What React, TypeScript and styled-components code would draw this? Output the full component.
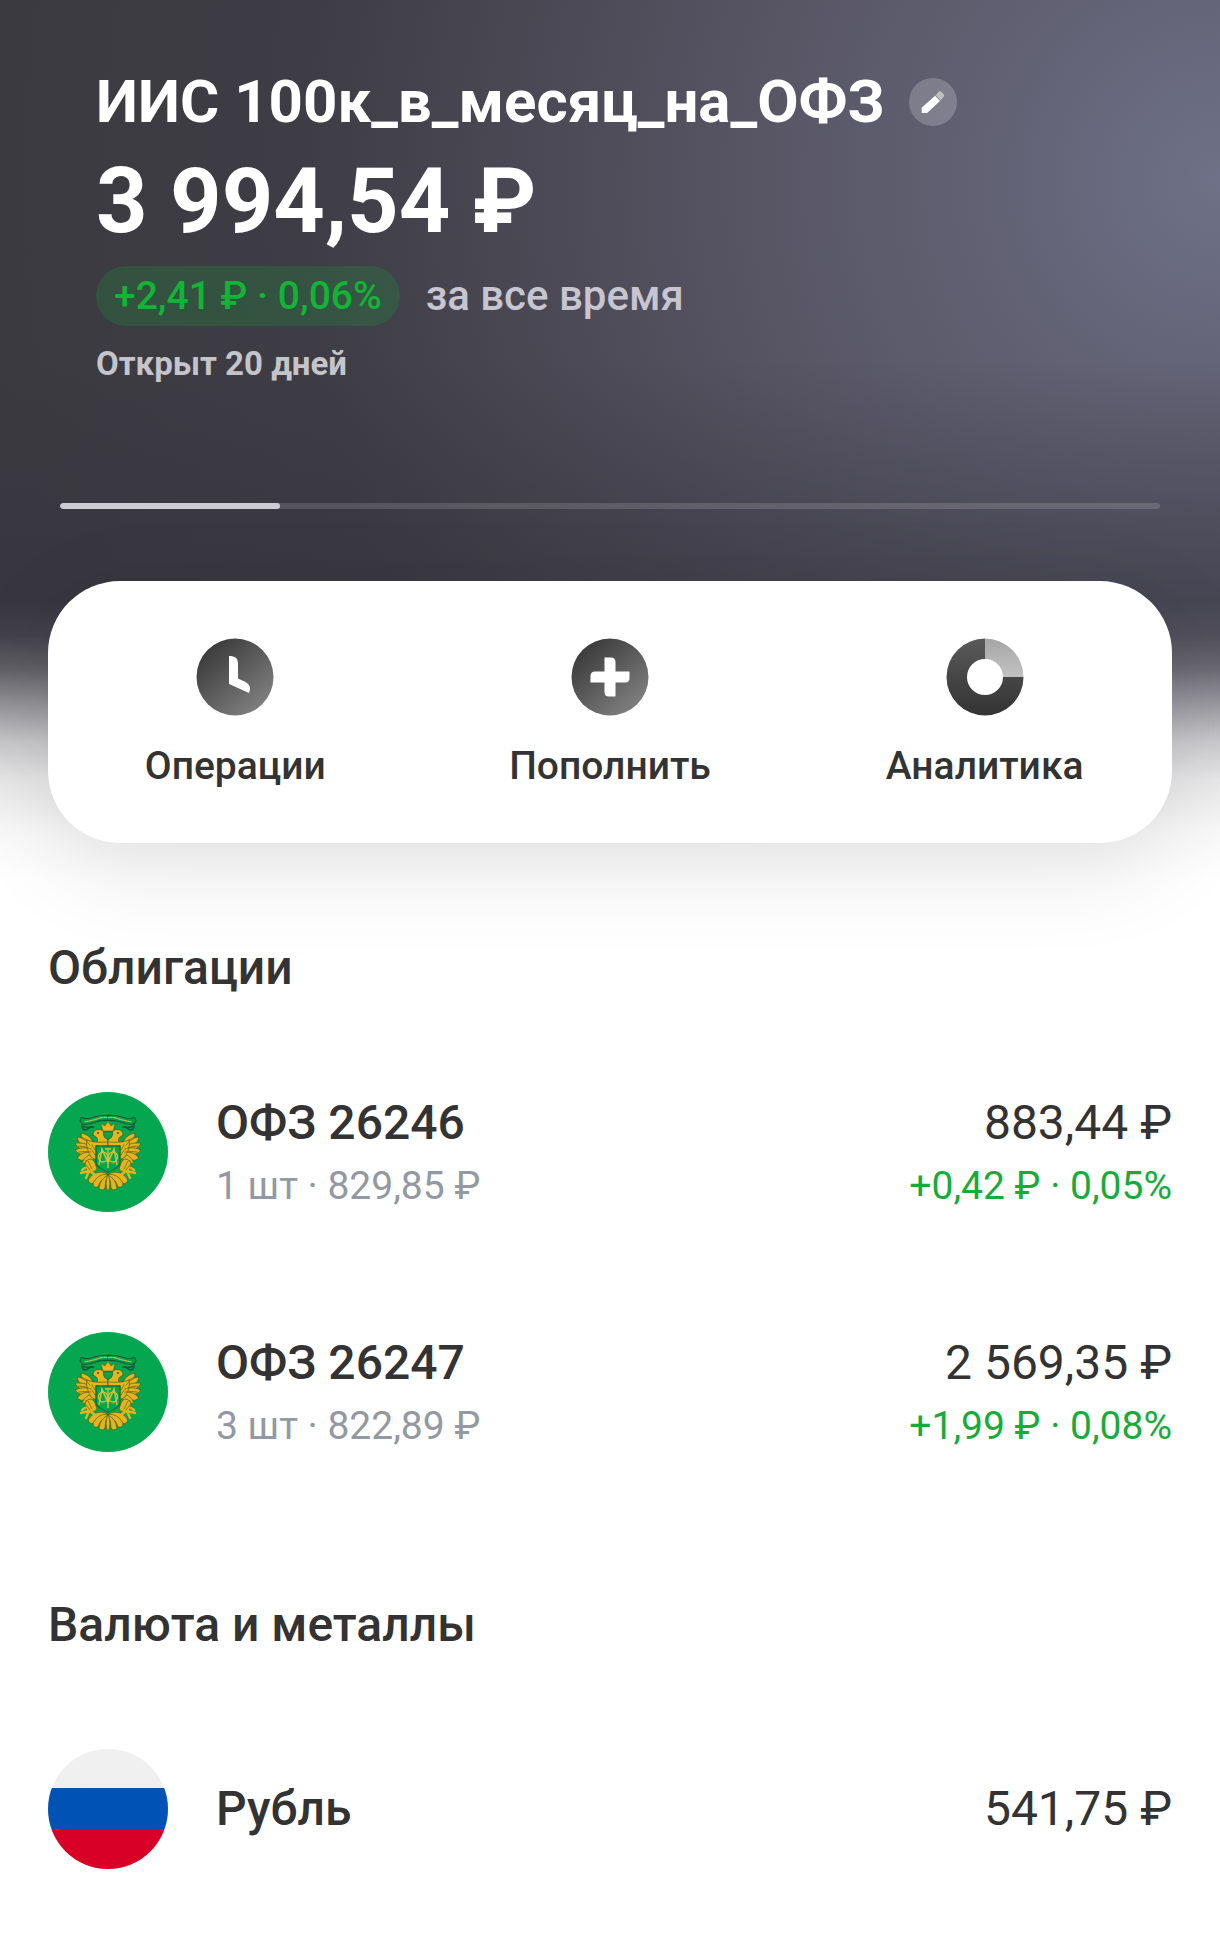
import React, { useId } from 'react';
import styled, { createGlobalStyle } from 'styled-components';

const GlobalStyle = createGlobalStyle`
    *, *::before, *::after {
        box-sizing: border-box;
    }

    body {
        margin: 0;
        background: #ffffff;
        color: #333333;
        font-family: Roboto, "Liberation Sans", sans-serif;
    }
`;

const Hero = styled.header`
    padding: 66px 48px 95px;
    background:
        linear-gradient(
            to bottom,
            rgba(255, 255, 255, 0) 600px,
            rgba(255, 255, 255, 0.06) 635px,
            rgba(255, 255, 255, 0.2) 668px,
            rgba(255, 255, 255, 0.45) 703px,
            rgba(255, 255, 255, 0.72) 742px,
            rgba(255, 255, 255, 0.88) 780px,
            rgba(255, 255, 255, 0.97) 830px,
            #ffffff 880px
        ),
        linear-gradient(to bottom, rgba(52, 51, 62, 0) 360px, rgba(52, 51, 62, 0.5) 600px),
        radial-gradient(
            circle at 100% 180px,
            #6e7187 0,
            #626275 220px,
            #595766 440px,
            #4b4955 680px,
            #3e3d45 920px,
            #3b3a40 1240px
        );
`;

const Summary = styled.div`
    display: flex;
    flex-direction: column;
    gap: 10px;
    padding: 0 48px;
    color: #ffffff;
`;

const TitleRow = styled.div`
    display: flex;
    align-items: center;
    gap: 24px;
`;

const Title = styled.h1`
    margin: 0;
    font-size: 60px;
    font-weight: 700;
    line-height: 72px;
`;

const EditButton = styled.button`
    display: flex;
    width: 48px;
    height: 48px;
    padding: 0;
    border: 0;
    border-radius: 50%;
    background: rgba(255, 255, 255, 0.2);
    cursor: pointer;
`;

const Balance = styled.div`
    font-size: 90px;
    font-weight: 700;
    line-height: 108px;
`;

const YieldRow = styled.div`
    display: flex;
    align-items: center;
    gap: 26px;
`;

const YieldPill = styled.span`
    padding: 0 18px;
    border-radius: 30px;
    background: rgba(15, 174, 57, 0.2);
    color: #12b436;
    font-size: 39px;
    font-weight: 500;
    line-height: 60px;
`;

const Period = styled.span`
    color: #c6c5d0;
    font-size: 42px;
    font-weight: 500;
    line-height: 60px;
`;

const OpenedFor = styled.div`
    color: #c4c4ca;
    font-size: 33px;
    font-weight: 700;
    line-height: 56px;
`;

const Track = styled.div`
    height: 6px;
    margin: 111px 12px 72px;
    border-radius: 3px;
    background: rgba(255, 255, 255, 0.14);
    overflow: hidden;
`;

const TrackFill = styled.div`
    height: 100%;
    border-radius: 3px;
    background: #cdccd2;
`;

const ActionCard = styled.nav`
    display: grid;
    grid-template-columns: repeat(3, 1fr);
    border-radius: 72px;
    background: #ffffff;
    box-shadow: 0 24px 96px rgba(0, 0, 0, 0.11);
`;

const Action = styled.button`
    display: flex;
    flex-direction: column;
    align-items: center;
    gap: 26px;
    padding: 57px 0 53px;
    border: 0;
    background: none;
    color: #333333;
    font-family: inherit;
    font-size: 39px;
    font-weight: 500;
    line-height: 48px;
    cursor: pointer;
`;

const Section = styled.section`
    padding: 0 48px 83px;
`;

const SectionTitle = styled.h2`
    margin: 0 0 34px;
    font-size: 48px;
    font-weight: 500;
    line-height: 60px;
`;

const Positions = styled.ul`
    margin: 0;
    padding: 0;
    list-style: none;
`;

const Position = styled.li`
    display: flex;
    align-items: center;
    gap: 48px;
    padding: 60px 0;
`;

const Avatar = styled.svg`
    flex: none;
    width: 120px;
    height: 120px;
    border-radius: 50%;
`;

const Info = styled.div<{ $end?: boolean }>`
    display: flex;
    flex-direction: column;
    gap: 6px;
    ${(p) => p.$end && 'margin-left: auto; text-align: right;'}
`;

const Primary = styled.span<{ $strong?: boolean }>`
    font-size: 48px;
    font-weight: ${(p) => p.$strong ? 500 : 400};
    line-height: 62px;
`;

const Secondary = styled.span<{ $gain?: boolean }>`
    color: ${(p) => p.$gain ? '#17ab3a' : '#9299a2'};
    font-size: 39px;
    line-height: 52px;
`;

function PencilIcon() {
    return (
        <svg width="48" height="48" viewBox="0 0 48 48" aria-hidden="true">
            <path d="M12.7 29.7 L26 17.7 L31 23 L18 35 H12.7 Z" fill="#ffffff" />
            <path d="M26.6 17.2 L29.6 13.8 Q30.8 12.4 32.2 13.8 L34.6 16 Q35.8 17.4 34.8 18.8 L31.5 22.6 Z" fill="#ffffff" opacity="0.5" />
        </svg>
    );
}

function DiscGradient({ id }: { id: string }) {
    return (
        <linearGradient id={id} x1="0.15" y1="0.1" x2="0.85" y2="0.9">
            <stop offset="0" stopColor="#3a3a3a" />
            <stop offset="1" stopColor="#808080" />
        </linearGradient>
    );
}

function ClockIcon() {
    const id = useId();
    return (
        <svg width="78" height="78" viewBox="0 0 78 78" aria-hidden="true">
            <defs><DiscGradient id={id} /></defs>
            <circle cx="39" cy="39" r="38.5" fill={`url(#${id})`} />
            <path d="M33 18 H35 Q42 18.5 42 25 V40.5 L49.5 44 Q56 47.5 53 55 L33 46 Z" fill="#ffffff" />
        </svg>
    );
}

function PlusIcon() {
    const id = useId();
    return (
        <svg width="78" height="78" viewBox="0 0 78 78" aria-hidden="true">
            <defs><DiscGradient id={id} /></defs>
            <circle cx="39" cy="39" r="38.5" fill={`url(#${id})`} />
            <path
                d="M33.5 19.5 H40 Q44.5 19.5 44.5 24 V33.5 H58.5 V40 Q58.5 44.5 54 44.5 H44.5 V58.5 H38 Q33.5 58.5 33.5 54 V44.5 H19.5 V38 Q19.5 33.5 24 33.5 H33.5 Z"
                fill="#ffffff"
            />
        </svg>
    );
}

function DonutIcon() {
    const id = useId();
    return (
        <svg width="78" height="78" viewBox="0 0 78 78" aria-hidden="true">
            <defs>
                <linearGradient id={`${id}-dark`} x1="0" y1="0" x2="0" y2="1">
                    <stop offset="0" stopColor="#5a5a5a" />
                    <stop offset="1" stopColor="#333333" />
                </linearGradient>
                <linearGradient id={`${id}-light`} x1="0" y1="0" x2="0" y2="1">
                    <stop offset="0" stopColor="#a6a6a6" />
                    <stop offset="1" stopColor="#c2c2c2" />
                </linearGradient>
            </defs>
            <path d="M39 0.5 A38.5 38.5 0 1 0 77.5 39 H57 A18 18 0 1 1 39 21 Z" fill={`url(#${id}-dark)`} />
            <path d="M39 0.5 A38.5 38.5 0 0 1 77.5 39 H57 A18 18 0 0 0 39 21 Z" fill={`url(#${id}-light)`} />
        </svg>
    );
}

// One side of the eagle; the emblem is symmetric around x = 60.
function EagleHalf() {
    return (
        <g strokeLinejoin="round" strokeLinecap="round">
            {/* ribbon */}
            <path d="M60 23 Q51 23 44 25.5 Q38 27.5 33 25.5 L32 29 L34 32 Q40 33 46 30.5 Q53 28 60 28.5 Z" fill="#089a4c" stroke="#0b5c36" strokeWidth="1.1" />
            <path d="M37 29.8 Q44 28.6 50 26.6 T60 25.8" fill="none" stroke="#a9c444" strokeWidth="1.3" strokeDasharray="1 1.2" />
            <path d="M34 33 Q34 39 39 37.5 Q42 34 45 35 M36 34.5 L41 36" fill="none" stroke="#0b5c36" strokeWidth="1.8" />
            <g fill="#e6b41c" stroke="#4f5d1c" strokeWidth="0.7">
                {/* head and neck */}
                <path d="M45 43 Q45 38 50 37.5 Q56 37 58 44 L60 49 V52 H46 Q51 50 49 46 Q47 44 45 43 Z" />
                {/* wing feathers */}
                <path d="M42 54 Q33 49 33 41 Q41 42 45 50 Z" />
                <path d="M42 56 Q30 53 29 45 Q37 45 44 52 Z" />
                <path d="M43 59 Q30 59 27 51 Q35 50 44 54 Z" />
                <path d="M44 62 Q33 66 27 58 Q35 54 44 57 Z" />
                <path d="M45 64 Q36 72 29 66 Q34 59 45 60 Z" />
                <path d="M47 65 Q42 73 34 71 Q37 63 45 62 Z" />
                <path d="M39 48 Q44 51 60 50 V53.5 Q52 54.5 48 53.5 V68 L43 65 Q37 55 39 48 Z" />
                {/* leg */}
                <path d="M38 69 Q44 64 47 71 L49 77 Q46 81 41 80 Q35 76 38 69 Z" />
                {/* tail */}
                <path d="M58 81 Q49 78 42 85 Q38 90 44 92 Q50 84 58 84 Z" />
                <path d="M59 82 Q50 82 45 91 Q45 96 50 95 Q52 88 59 84 Z" />
                <path d="M60 83 Q52 87 51 96 Q54 100 57 96 Q57 88 60 84 Z" />
            </g>
            {/* claw */}
            <path d="M42 79 L47 83 M41 79 L38 86 M41 79 L33 81 M37 76 L34 78" fill="none" stroke="#e6b41c" strokeWidth="2.4" />
            <path d="M32 45 Q38 48 42 53 M30 54 Q37 54 43 57 M31 60 Q38 59 43 60 M44 53 L47 58 M44 58 L47 63 M40 69 L44 77 M38 73 L42 78" fill="none" stroke="#55641c" strokeWidth="0.7" />
            <circle cx="50" cy="41" r="0.9" fill="#24431d" />
        </g>
    );
}

function EmblemAvatar() {
    return (
        <Avatar viewBox="0 0 120 120" aria-hidden="true">
            <rect width="120" height="120" fill="#04a650" />
            <EagleHalf />
            <g transform="matrix(-1 0 0 1 120 0)"><EagleHalf /></g>
            <path d="M60 82 Q56 92 60 100 Q64 92 60 82 Z" fill="#e6b41c" stroke="#4f5d1c" strokeWidth="0.7" />
            {/* crown */}
            <path d="M55 39 L53 31.5 L57 34 L60 29.5 L63 34 L67 31.5 L65 39 Z" fill="#f5b417" stroke="#5d6a1c" strokeWidth="0.6" />
            <path d="M55.5 40 H64.5 V43 Q64 46 60 47.5 Q56 46 55.5 43 Z" fill="#04a650" stroke="#0a6a35" strokeWidth="0.7" />
            {/* shield with the interlaced sign */}
            <path d="M48 54 H72 V71 Q71 76 60 80 Q49 76 48 71 Z" fill="#04a650" stroke="#0a6a35" strokeWidth="1.2" />
            <g fill="none" stroke="#d3c433" strokeWidth="1.4">
                <path d="M60 57 V76 M57 57 H63 M51 73 L54 57 L60 71 L66 57 L69 73" />
                <ellipse cx="55" cy="65" rx="4.5" ry="5" />
                <ellipse cx="65" cy="65" rx="4.5" ry="5" />
            </g>
        </Avatar>
    );
}

function FlagAvatar() {
    return (
        <Avatar viewBox="0 0 120 120" aria-hidden="true">
            <rect width="120" height="120" fill="#f0f0f0" />
            <rect y="39" width="120" height="42" fill="#0052b4" />
            <rect y="81" width="120" height="39" fill="#d80027" />
        </Avatar>
    );
}

const bonds = [
    { name: 'ОФЗ 26246', details: '1 шт · 829,85 ₽', total: '883,44 ₽', gain: '+0,42 ₽ · 0,05%' },
    { name: 'ОФЗ 26247', details: '3 шт · 822,89 ₽', total: '2 569,35 ₽', gain: '+1,99 ₽ · 0,08%' },
];

const scrolled = 20;

export default function App() {
    return (
        <>
            <GlobalStyle />
            <Hero>
                <Summary>
                    <TitleRow>
                        <Title>ИИС 100к_в_месяц_на_ОФЗ</Title>
                        <EditButton type="button" aria-label="Изменить название">
                            <PencilIcon />
                        </EditButton>
                    </TitleRow>
                    <Balance>3 994,54 ₽</Balance>
                    <YieldRow>
                        <YieldPill>+2,41 ₽ · 0,06%</YieldPill>
                        <Period>за все время</Period>
                    </YieldRow>
                    <OpenedFor>Открыт 20 дней</OpenedFor>
                </Summary>
                <Track role="progressbar" aria-valuenow={scrolled} aria-valuemin={0} aria-valuemax={100}>
                    <TrackFill style={{ width: `${scrolled}%` }} />
                </Track>
                <ActionCard>
                    <Action type="button"><ClockIcon />Операции</Action>
                    <Action type="button"><PlusIcon />Пополнить</Action>
                    <Action type="button"><DonutIcon />Аналитика</Action>
                </ActionCard>
            </Hero>
            <main>
                <Section>
                    <SectionTitle>Облигации</SectionTitle>
                    <Positions>
                        {bonds.map((bond) => (
                            <Position key={bond.name}>
                                <EmblemAvatar />
                                <Info>
                                    <Primary $strong>{bond.name}</Primary>
                                    <Secondary>{bond.details}</Secondary>
                                </Info>
                                <Info $end>
                                    <Primary>{bond.total}</Primary>
                                    <Secondary $gain>{bond.gain}</Secondary>
                                </Info>
                            </Position>
                        ))}
                    </Positions>
                </Section>
                <Section>
                    <SectionTitle>Валюта и металлы</SectionTitle>
                    <Positions>
                        <Position>
                            <FlagAvatar />
                            <Info>
                                <Primary $strong>Рубль</Primary>
                            </Info>
                            <Info $end>
                                <Primary>541,75 ₽</Primary>
                            </Info>
                        </Position>
                    </Positions>
                </Section>
            </main>
        </>
    );
}
